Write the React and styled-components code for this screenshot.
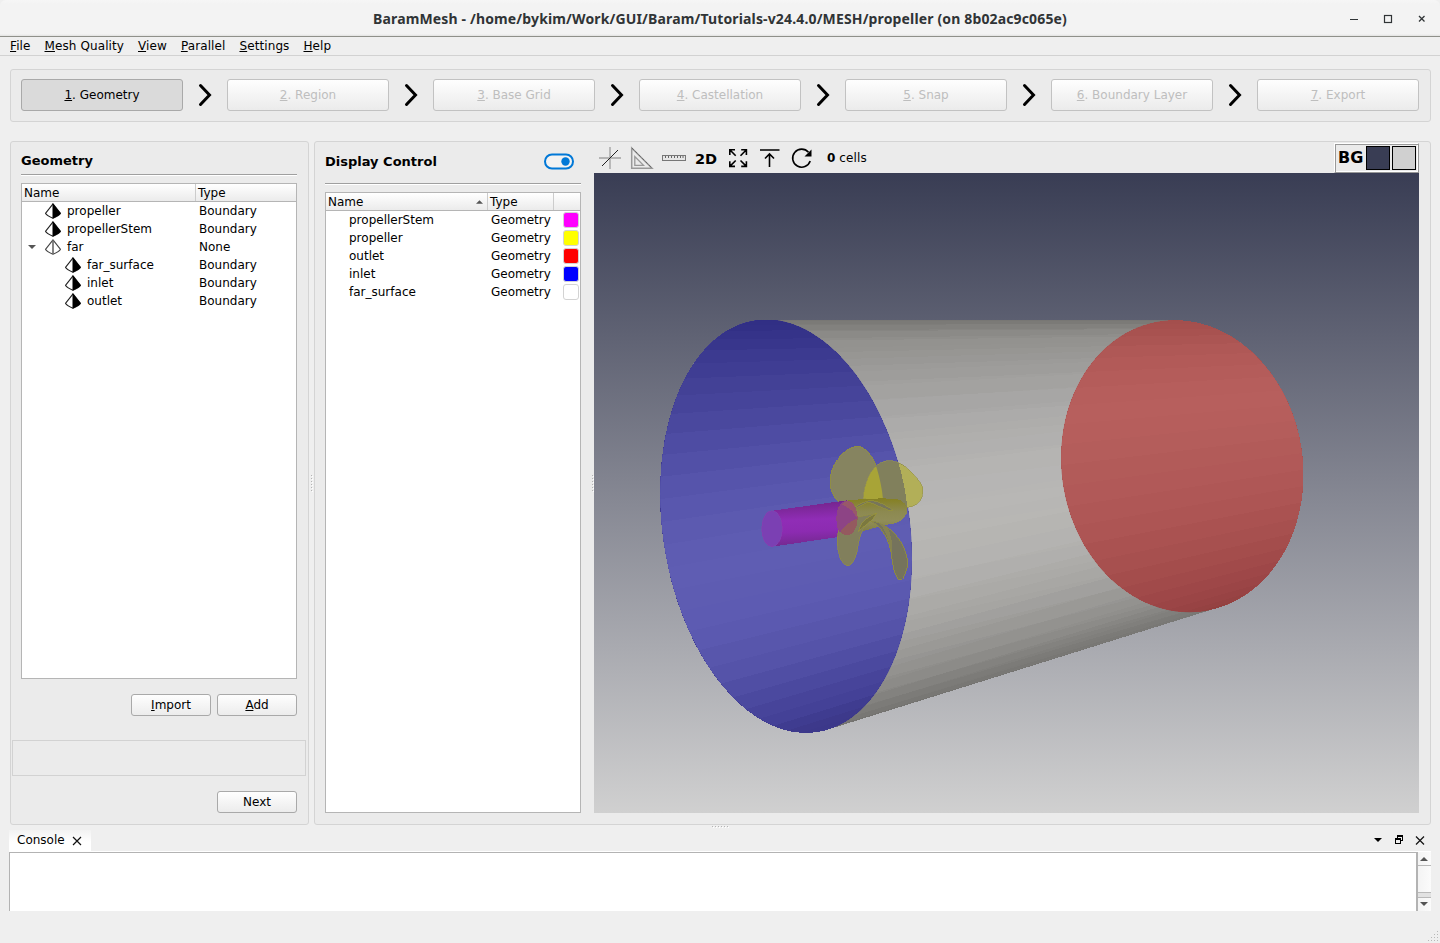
import React from "react";
import styled, { createGlobalStyle, css } from "styled-components";

const GlobalStyle = createGlobalStyle`
  * { box-sizing: border-box; }
  body {
    margin: 0;
    background: #efefef;
    color: #000;
    font: 12px/18px "DejaVu Sans", sans-serif;
    overflow: hidden;
  }
`;

const Window = styled.div`
  width: 1440px;
  height: 943px;
  display: flex;
  flex-direction: column;
`;

const TitleBar = styled.header`
  height: 37px;
  flex: none;
  display: grid;
  grid-template-columns: 110px 1fr 110px;
  align-items: center;
  background: linear-gradient(#f6f6f6, #f3f3f3 4px, #f3f3f3 34px, #e2e2e0 36px);
  border-bottom: 1px solid #8f908a;
  border-radius: 6px 6px 0 0;
`;

const Title = styled.h1`
  grid-column: 2;
  margin: 0;
  text-align: center;
  white-space: nowrap;
  color: #303436;
  font: bold 14px/38px "Noto Sans", sans-serif;
  letter-spacing: 0.145px;
`;

const WindowButtons = styled.div`
  display: flex;
  gap: 20px;
  padding-left: 17px;
`;

const MenuBar = styled.nav`
  height: 19px;
  flex: none;
  display: flex;
  gap: 14px;
  padding: 0 10px;
  line-height: 18px;
  letter-spacing: 0.1px;
  border-bottom: 1px solid #d2d2d2;
`;

const Mnemonic = styled.span`
  text-decoration: underline;
  text-decoration-thickness: 1px;
  text-underline-offset: 1px;
`;

const frame = css`
  background: #ebebeb;
  border: 1px solid #d4d4d4;
  border-radius: 3px;
`;

const StepBar = styled.section`
  ${frame}
  flex: none;
  height: 53px;
  margin: 13px 9px 19px 10px;
  padding: 9px 11px 0 10px;
  display: flex;
  align-items: flex-start;
  justify-content: space-between;
`;

const StepButton = styled.button`
  width: 162px;
  height: 32px;
  padding: 0 0 1px;
  font: inherit;
  color: ${(p) => (p.$current ? "#000" : "#bebebe")};
  border: 1px solid ${(p) => (p.$current ? "#a9a9a9" : "#c2c2c2")};
  border-radius: 3px;
  background: ${(p) => (p.$current ? "#dadada" : "linear-gradient(#fefefe, #ebebeb)")};
`;

const Arrow = styled.svg`
  width: 14px;
  height: 24px;
  margin-top: 4px;
`;

const Workspace = styled.main`
  height: 684px;
  flex: none;
  display: flex;
  padding: 0 9px 0 10px;
`;

const GeometryPanel = styled.section`
  ${frame}
  width: 299px;
  padding: 0 1px;
  display: flex;
  flex-direction: column;
`;

const Padded = styled.div`
  padding: 0 10px 0 9px;
  display: flex;
  flex-direction: column;
`;

const Splitter = styled.div`
  width: ${(p) => p.$width}px;
  display: flex;
  flex-direction: column;
  align-items: ${(p) => p.$align || "center"};
  justify-content: center;
  gap: 2px;
  padding-right: 1px;
`;

const DockSplitter = styled.div`
  height: 5px;
  flex: none;
  display: flex;
  justify-content: center;
  gap: 2px;
  padding-top: 1px;
`;

const Dot = styled.i`
  width: 1px;
  height: 1px;
  background: #b4b4b4;
  box-shadow: 1px 1px #fff;
`;

const PanelTitle = styled.h2`
  margin: 0;
  height: ${(p) => p.$height}px;
  padding-top: ${(p) => p.$drop || 0}px;
  padding-bottom: ${(p) => p.$lift || 0}px;
  display: flex;
  align-items: center;
  justify-content: space-between;
  font-size: 13px;
  font-weight: bold;
  border-bottom: 1px solid #9f9f9f;
  box-shadow: 0 1px #fff;
`;

const Switch = styled.svg`
  width: 30px;
  height: 17px;
  margin-right: 7px;
`;

const Table = styled.div`
  height: ${(p) => p.$height}px;
  margin-top: 8px;
  background: #fff;
  border: 1px solid #b5b5b5;
`;

const HeaderRow = styled.div`
  height: 18px;
  display: grid;
  grid-template-columns: ${(p) => p.$columns};
  background: linear-gradient(#fff, #ebebeb);
  border-bottom: 1px solid #b5b5b5;
`;

const HeaderCell = styled.div`
  height: 17px;
  display: flex;
  justify-content: space-between;
  align-items: center;
  padding: 0 4px 0 2px;
  line-height: 18px;
  & + & { border-left: 1px solid #ccc; }
`;

const HeaderLabel = styled.span`
  padding-top: 1px;
`;

const Row = styled.div`
  height: 18px;
  display: grid;
  grid-template-columns: ${(p) => p.$columns};
  align-items: center;
`;

const NameCell = styled.div`
  display: flex;
  align-items: center;
  padding-left: ${(p) => p.$indent}px;
`;

const Expander = styled.span`
  width: 17px;
  display: flex;
  padding-left: 1px;
`;

const TreeName = styled.span`
  padding-left: 5px;
`;

const TypeCell = styled.div`
  padding-left: 4px;
`;

const Swatch = styled.span`
  width: 16px;
  height: 16px;
  justify-self: end;
  margin-right: 1px;
  border: 1px solid #d3d3d3;
  border-radius: 3px;
  background: ${(p) => p.$color};
`;

const ButtonRow = styled.div`
  display: flex;
  justify-content: flex-end;
  gap: 6px;
  margin-top: 15px;
`;

const PushButton = styled.button`
  width: 80px;
  height: 22px;
  padding: 0;
  font: inherit;
  color: #000;
  border: 1px solid #a9a9a9;
  border-radius: 3px;
  background: linear-gradient(#fefefe, #ececec);
`;

const MessageBox = styled.div`
  height: 36px;
  margin-top: 24px;
  margin-right: 1px;
  border: 1px solid #d2d2d2;
`;

const DisplayPanel = styled.section`
  ${frame}
  width: 1117px;
  display: flex;
`;

const DisplayColumn = styled.div`
  width: 266px;
  padding-left: 10px;
`;

const ViewColumn = styled.div`
  width: 825px;
`;

const ViewToolbar = styled.div`
  height: 31px;
  display: flex;
  align-items: center;
`;

const ToolIcons = styled.div`
  width: 224px;
  height: 31px;
`;

const CellCount = styled.span`
  margin-left: 9px;
  letter-spacing: 0.1px;
`;

const BackgroundBox = styled.div`
  width: 85px;
  height: 30px;
  margin-left: auto;
  align-self: flex-end;
  padding-left: 3px;
  display: flex;
  align-items: center;
  gap: 2px;
  border: 1px solid #fff;
  border-right-color: #999;
  border-bottom-color: #999;
  box-shadow: inset 1px 1px #999, inset -1px -1px #fff;
  font: bold 16px/26px "DejaVu Sans", sans-serif;
`;

const BackgroundLabel = styled.span`
  width: 26px;
`;

const BackgroundSwatch = styled.span`
  width: 24px;
  height: 24px;
  border: 1px solid #000;
  background: ${(p) => p.$color};
`;

const Scene = styled.svg`
  display: block;
  width: 825px;
  height: 640px;
`;

const ConsoleBar = styled.div`
  height: 22px;
  flex: none;
  margin: 0 9px;
  display: flex;
  justify-content: space-between;
  border-bottom: 1px solid #fff;
`;

const ConsoleTab = styled.div`
  width: 82px;
  padding: 0 9px 1px 8px;
  display: flex;
  align-items: center;
  justify-content: space-between;
  background: linear-gradient(#f2f2f2, #fff 12px);
`;

const CloseMark = styled.svg`
  width: 10px;
  height: 10px;
  margin-top: 2px;
`;

const ConsoleBody = styled.div`
  height: 59px;
  flex: none;
  margin: 0 9px;
  display: flex;
`;

const ConsoleText = styled.div`
  flex: 1;
  background: #fff;
  border: 1px solid #b3b3b3;
  border-bottom: 0;
`;

const ScrollBar = styled.div`
  width: 14px;
  display: flex;
  flex-direction: column;
  border-left: 1px solid #b3b3b3;
  background: #e2e2e2;
`;

const ScrollPart = styled.div`
  height: ${(p) => p.$height}px;
  padding-right: 1px;
  display: flex;
  align-items: center;
  justify-content: center;
  background: linear-gradient(90deg, #f4f4f4, #fbfbfb);
  border-bottom: 1px solid ${(p) => (p.$last ? "transparent" : "#b9b9b9")};
`;

const ScrollGap = styled.div`
  height: 5px;
  border-bottom: 1px solid #b9b9b9;
`;

const Footer = styled.footer`
  flex: 1;
  display: flex;
  align-items: flex-end;
  justify-content: flex-end;
`;

const steps = ["Geometry", "Region", "Base Grid", "Castellation", "Snap", "Boundary Layer", "Export"];
const menus = ["File", "Mesh Quality", "View", "Parallel", "Settings", "Help"];

const geometries = [
  { name: "propeller", type: "Boundary", depth: 0 },
  { name: "propellerStem", type: "Boundary", depth: 0 },
  { name: "far", type: "None", depth: 0, open: true },
  { name: "far_surface", type: "Boundary", depth: 1 },
  { name: "inlet", type: "Boundary", depth: 1 },
  { name: "outlet", type: "Boundary", depth: 1 },
];

const actors = [
  ["propellerStem", "#ff00ff"],
  ["propeller", "#ffff00"],
  ["outlet", "#ff0000"],
  ["inlet", "#0000ff"],
  ["far_surface", "#ffffff"],
];

const Chevron = () => (
  <Arrow viewBox="0 0 14 24">
    <path d="M2.500 2.500 11.500 12l-9 9.500" fill="none" stroke="#000" strokeWidth="3" strokeLinecap="round" />
  </Arrow>
);

const Pyramid = ({ hollow }) => (
  <svg width="18" height="18" viewBox="0 0 18 18">
    <path
      d="M9 1.800 1.500 11.300Q2.500 13.500 9 16.300 15.500 13.500 16.500 11.300Z"
      fill="#fff"
      stroke={hollow ? "#444" : "#222"}
      strokeWidth="1.100"
      strokeLinejoin="round"
    />
    {hollow ? (
      <path d="M9 2V16" stroke="#666" strokeWidth="1.600" />
    ) : (
      <path d="M8.500 1.500H9L16.700 11.300Q15.500 13.700 9 16.500H8.500Z" fill="#000" />
    )}
  </svg>
);

const Triangle = ({ up, width = 8 }) => (
  <svg width={width} height="4" viewBox="0 0 8 4">
    <path d={up ? "M0 4 4 0 8 4Z" : "M0 0H8L4 4Z"} fill="#555" />
  </svg>
);

const Toggle = () => (
  <Switch viewBox="0 0 30 17">
    <rect x="1" y="1.500" width="28" height="14" rx="7" fill="#f2f2f2" stroke="#0078d7" strokeWidth="2" />
    <circle cx="21.500" cy="8.500" r="4.200" fill="#0078d7" />
  </Switch>
);

const tools = (
  <svg width="224" height="31" viewBox="594 142 224 31" fill="none">
    <path d="M599 158H621M610 147V169" stroke="#b4b4b4" strokeWidth="1.800" />
    <path d="M602 166 618 150" stroke="#222" />
    <path d="M631.700 148V168.300H652Z" stroke="#999" strokeWidth="1.500" />
    <path d="M632 148 652 168" stroke="#555" strokeDasharray="1 1" />
    <path d="M634.800 156.500V165.300H643.500Z" stroke="#999" strokeWidth="1.300" />
    <rect x="662.500" y="155.500" width="23" height="5" fill="#e6e6e6" stroke="#777" />
    <path d="M665.500 156v2M668.500 156v2M671.500 156v2M674.500 156v2M677.500 156v2M680.500 156v2M683 156v2" stroke="#666" />
    <path
      d="M729.800 155V149.800H735M729.800 149.800 735.700 155.700M741.200 149.800H746.400V155M746.400 149.800 740.500 155.700M729.800 161.200V166.400H735M729.800 166.400 735.700 160.500M741.200 166.400H746.400V161.200M746.400 166.400 740.500 160.500"
      stroke="#000"
      strokeWidth="1.600"
    />
    <path d="M760 150H779.500M769.500 167V154M765 158.500 769.500 154 774 158.500" stroke="#000" strokeWidth="1.600" />
    <path d="M810.200 161A9 9 0 1 1 808.500 152.300" stroke="#000" strokeWidth="1.600" />
    <path d="M811.500 149.500V156.500H804.500Z" fill="#000" />
    <text x="695" y="163.500" fill="#000" fontFamily="DejaVu Sans" fontWeight="bold" fontSize="14.500">2D</text>
  </svg>
);

/* Cylinder geometry: each rim is an ellipse walked clockwise from its top. */
const INLET = { cx: 786, cy: 526.2, lean: 20, rx: 124.4, ry: 206.7 };
const OUTLET = { cx: 1182.3, cy: 466.2, lean: 7, rx: 121, ry: 146 };
const FACETS = 56;
const LOWEST = 169.6;

const rimPoint = (rim, deg) => {
  const t = (deg * Math.PI) / 180;
  return [
    rim.cx - rim.lean * Math.cos(t) + rim.rx * Math.sin(t),
    rim.cy - rim.ry * Math.cos(t),
  ];
};

const toPoints = (list) => list.map((p) => p.map((n) => n.toFixed(1)).join(",")).join(" ");
const rimPolygon = (rim) => toPoints(Array.from({ length: 120 }, (_, i) => rimPoint(rim, i * 3)));

const shades = {
  gray: [[1, 120, 119, 116], [0.9, 145, 144, 141], [0.7, 160, 159, 157], [0.4, 174, 173, 172], [0.1, 184, 183, 181], [-0.2, 185, 184, 181], [-0.5, 175, 174, 172], [-0.75, 156, 155, 152], [-0.95, 128, 127, 124], [-1, 110, 109, 106]],
  blue: [[1, 48, 46, 132], [0.8, 61, 59, 145], [0.6, 70, 68, 153], [0.37, 79, 77, 164], [0.1, 89, 87, 174], [-0.2, 95, 93, 179], [-0.5, 93, 91, 178], [-0.75, 84, 82, 168], [-0.95, 68, 65, 151], [-1, 60, 56, 138]],
  red: [[1, 163, 78, 76], [0.8, 176, 89, 87], [0.5, 184, 95, 93], [0.2, 179, 92, 90], [-0.1, 175, 87, 86], [-0.4, 167, 80, 79], [-0.7, 158, 71, 72], [-0.92, 148, 65, 65], [-1, 140, 60, 58]],
};

const shadeAt = (name, c) => {
  const stops = shades[name];
  const i = Math.max(1, stops.findIndex((s) => s[0] <= c));
  const a = stops[i - 1];
  const b = stops[i];
  const k = (a[0] - c) / (a[0] - b[0]);
  return `rgb(${[1, 2, 3].map((n) => Math.round(a[n] + (b[n] - a[n]) * k)).join(",")})`;
};

const Wall = ({ from, to, shade, ...rest }) => {
  const count = Math.round((Math.abs(to - from) / 360) * FACETS);
  const step = (to - from) / count;
  return (
    <g {...rest}>
      {Array.from({ length: count }, (_, i) => {
        const a = from + i * step;
        const b = a + step;
        const c = Math.max(-1, Math.cos(((a + b) * Math.PI) / 360));
        return (
          <polygon
            key={i}
            fill={shadeAt(shade, c)}
            points={toPoints([rimPoint(INLET, a), rimPoint(OUTLET, a), rimPoint(OUTLET, b), rimPoint(INLET, b)])}
          />
        );
      })}
    </g>
  );
};

const BLADE_A = "M322 48C350 50 372 85 380 112C390 145 396 175 399 206L340 225 302 240C280 228 240 205 240 155C240 100 285 50 322 48Z";
const BLADE_B = "M340 206C342 160 365 92 418 91C455 91 480 120 500 143C518 162 524 180 515 203C506 222 490 230 470 231L440 208Z";

const Propeller = () => (
  <g transform="translate(750 430.3) scale(.33333)">
    <path d={BLADE_A} fill="#868460" stroke="#8f8d45" strokeWidth="3" />
    <path d={BLADE_B} fill="#81805c" />
    <g clipPath="url(#bladeA)"><path d={BLADE_B} fill="#a8a437" /></g>
    <path d="M446 99C470 108 485 126 500 143C518 162 524 180 515 203C506 222 490 230 472 231C468 190 460 150 446 99Z" fill="#b2af58" />
    <path d={BLADE_B} fill="none" stroke="#98954a" strokeWidth="2" />
    <path d="M68 241 292 210 322 262 292 316 68 349Z" fill="url(#stem)" />
    <path d="M290 211C340 204 400 203 440 206C465 212 474 230 472 245C465 270 440 282 405 284L330 305 292 316Z" fill="url(#hub)" />
    <path d="M302 240C325 222 345 212 362 211C385 212 408 225 430 240L418 240C398 234 380 224 355 215Z" fill="#77755a" stroke="#96933b" strokeWidth="2" />
    <path d="M262 318C262 295 285 272 325 260L380 249C350 270 333 300 325 340C322 370 312 405 292 407C270 400 260 360 262 318Z" fill="#817f5c" stroke="#918e45" strokeWidth="2" />
    <path d="M325 303C330 280 348 262 380 249C368 272 348 282 325 303Z" fill="#7b783f" stroke="#9a9639" strokeWidth="2" />
    <path d="M362 272C400 276 440 305 460 350C475 380 474 405 469 420C462 440 458 448 448 449C435 440 428 410 424 370C418 335 400 290 362 272Z" fill="#75735c" stroke="#8c8944" strokeWidth="3" />
    <path d="M385 277C405 295 418 325 424 370C430 350 425 315 412 289Z" fill="#858250" />
    <ellipse cx="66" cy="295" rx="31" ry="54" fill="#7b40b3" stroke="#8a3eaf" strokeWidth="1.500" />
    <ellipse cx="291" cy="263" rx="32" ry="52" fill="#96565f" fillOpacity=".9" />
    <path d="M291 211C270 212 259 238 259 264C260 290 264 302 270 306C285 284 305 270 322 264C322 235 310 211 291 211Z" fill="#8d4485" />
    <path d="M291 211C310 211 322 235 322 264L305 240 276 222Z" fill="#98586a" />
  </g>
);

const Viewport = () => (
  <Scene viewBox="594 173 825 640" shapeRendering="crispEdges">
    <defs>
      <linearGradient id="sky" x2="0" y2="1">
        <stop stopColor="#393d54" />
        <stop offset="1" stopColor="#d0d0d0" />
      </linearGradient>
      <linearGradient id="stem" x1="0" y1="0" x2=".09" y2="1">
        <stop offset=".1" stopColor="#76258f" />
        <stop offset=".45" stopColor="#902db6" />
        <stop offset=".7" stopColor="#8c2bb1" />
        <stop offset="1" stopColor="#73298f" />
      </linearGradient>
      <linearGradient id="hub" x2="0" y2="1">
        <stop stopColor="#858021" />
        <stop offset=".35" stopColor="#8c8950" />
        <stop offset=".6" stopColor="#908d58" />
        <stop offset="1" stopColor="#7d7a3b" />
      </linearGradient>
      <clipPath id="inletRim"><polygon points={rimPolygon(INLET)} /></clipPath>
      <clipPath id="outletRim"><polygon points={rimPolygon(OUTLET)} /></clipPath>
      <clipPath id="bladeA"><path d={BLADE_A} /></clipPath>
    </defs>
    <rect x="594" y="173" width="825" height="640" fill="url(#sky)" />
    <Wall from={360} to={LOWEST} shade="gray" />
    <Wall from={0} to={LOWEST} shade="gray" opacity=".5" />
    <polygon points={rimPolygon(INLET)} fill="#3e3a90" />
    <Wall from={360} to={LOWEST} shade="blue" clipPath="url(#inletRim)" />
    <polygon points={rimPolygon(OUTLET)} fill="#a5504e" />
    <Wall from={0} to={LOWEST} shade="red" clipPath="url(#outletRim)" />
    <Propeller />
  </Scene>
);

const Dots = () => Array.from({ length: 6 }, (_, i) => <Dot key={i} />);

const GEOMETRY_COLUMNS = "173px 1fr";
const DISPLAY_COLUMNS = "161px 66px 1fr";

export default function App() {
  return (
    <Window>
      <GlobalStyle />
      <TitleBar>
        <Title>BaramMesh - /home/bykim/Work/GUI/Baram/Tutorials-v24.4.0/MESH/propeller (on 8b02ac9c065e)</Title>
        <WindowButtons>
          <svg width="90" height="16" viewBox="1347 10 90 16" fill="none" stroke="#303436">
            <path d="M1350 18.500H1358" />
            <rect x="1384.500" y="14.500" width="7" height="7" strokeWidth="1.200" />
            <path d="M1419 15 1424.500 20.500M1424.500 15 1419 20.500" strokeWidth="1.300" />
          </svg>
        </WindowButtons>
      </TitleBar>

      <MenuBar>
        {menus.map((m) => (
          <span key={m}><Mnemonic>{m[0]}</Mnemonic>{m.slice(1)}</span>
        ))}
      </MenuBar>

      <StepBar>
        {steps.map((s, i) => (
          <React.Fragment key={s}>
            {i > 0 && <Chevron />}
            <StepButton $current={i === 0}><Mnemonic>{i + 1}</Mnemonic>. {s}</StepButton>
          </React.Fragment>
        ))}
      </StepBar>

      <Workspace>
        <GeometryPanel>
          <Padded>
            <PanelTitle $height={33} $drop={6}><span>Geometry</span></PanelTitle>
            <Table $height={496}>
              <HeaderRow $columns={GEOMETRY_COLUMNS}>
                <HeaderCell><HeaderLabel>Name</HeaderLabel></HeaderCell>
                <HeaderCell><HeaderLabel>Type</HeaderLabel></HeaderCell>
              </HeaderRow>
              {geometries.map((g) => (
                <Row key={g.name} $columns={GEOMETRY_COLUMNS}>
                  <NameCell $indent={5 + g.depth * 20}>
                    <Expander>{g.open && <Triangle />}</Expander>
                    <Pyramid hollow={g.open} />
                    <TreeName>{g.name}</TreeName>
                  </NameCell>
                  <TypeCell>{g.type}</TypeCell>
                </Row>
              ))}
            </Table>
            <ButtonRow>
              <PushButton><Mnemonic>I</Mnemonic>mport</PushButton>
              <PushButton><Mnemonic>A</Mnemonic>dd</PushButton>
            </ButtonRow>
          </Padded>
          <MessageBox />
          <Padded>
            <ButtonRow><PushButton>Next</PushButton></ButtonRow>
          </Padded>
        </GeometryPanel>

        <Splitter $width={5}><Dots /></Splitter>

        <DisplayPanel>
          <DisplayColumn>
            <PanelTitle $height={42} $lift={2}>
              <span>Display Control</span>
              <Toggle />
            </PanelTitle>
            <Table $height={621}>
              <HeaderRow $columns={DISPLAY_COLUMNS}>
                <HeaderCell><HeaderLabel>Name</HeaderLabel><Triangle up width={7} /></HeaderCell>
                <HeaderCell><HeaderLabel>Type</HeaderLabel></HeaderCell>
                <HeaderCell />
              </HeaderRow>
              {actors.map(([name, color]) => (
                <Row key={name} $columns={DISPLAY_COLUMNS}>
                  <NameCell $indent={23}>{name}</NameCell>
                  <TypeCell>Geometry</TypeCell>
                  <Swatch $color={color} />
                </Row>
              ))}
            </Table>
          </DisplayColumn>
          <Splitter $width={13} $align="flex-end"><Dots /></Splitter>
          <ViewColumn>
            <ViewToolbar>
              <ToolIcons>{tools}</ToolIcons>
              <CellCount><b>0</b> cells</CellCount>
              <BackgroundBox>
                <BackgroundLabel>BG</BackgroundLabel>
                <BackgroundSwatch $color="#393d54" />
                <BackgroundSwatch $color="#d0d0d0" />
              </BackgroundBox>
            </ViewToolbar>
            <Viewport />
          </ViewColumn>
        </DisplayPanel>
      </Workspace>

      <DockSplitter><Dots /></DockSplitter>

      <ConsoleBar>
        <ConsoleTab>
          Console
          <CloseMark viewBox="0 0 10 10">
            <path d="M1 1 9 9M9 1 1 9" stroke="#111" strokeWidth="1.200" fill="none" />
          </CloseMark>
        </ConsoleTab>
        <svg width="60" height="21" viewBox="1371 830 60 21">
          <path d="M1374 838H1382L1378 842Z" fill="#000" />
          <path d="M1397 835H1403V841H1401V840H1402V837H1398V838H1397Z" fill="#000" />
          <path d="M1395 838H1401V844H1395ZM1396 840V843H1400V840Z" fill="#000" fillRule="evenodd" />
          <path d="M1416 836.500 1424 844.500M1424 836.500 1416 844.500" stroke="#111" strokeWidth="1.200" />
        </svg>
      </ConsoleBar>
      <ConsoleBody>
        <ConsoleText />
        <ScrollBar>
          <ScrollPart $height={14}><Triangle up /></ScrollPart>
          <ScrollPart $height={27} />
          <ScrollGap />
          <ScrollPart $height={13} $last><Triangle /></ScrollPart>
        </ScrollBar>
      </ConsoleBody>
      <Footer>
        <svg width="14" height="14" viewBox="0 0 14 14" fill="#b8b8b8">
          {[[9, 0], [9, 3], [6, 3], [9, 6], [6, 6], [3, 6], [9, 9], [6, 9], [3, 9], [0, 9]].map(([x, y]) => (
            <rect key={`${x}-${y}`} x={x + 2} y={y + 2} width="1" height="1" />
          ))}
        </svg>
      </Footer>
    </Window>
  );
}
